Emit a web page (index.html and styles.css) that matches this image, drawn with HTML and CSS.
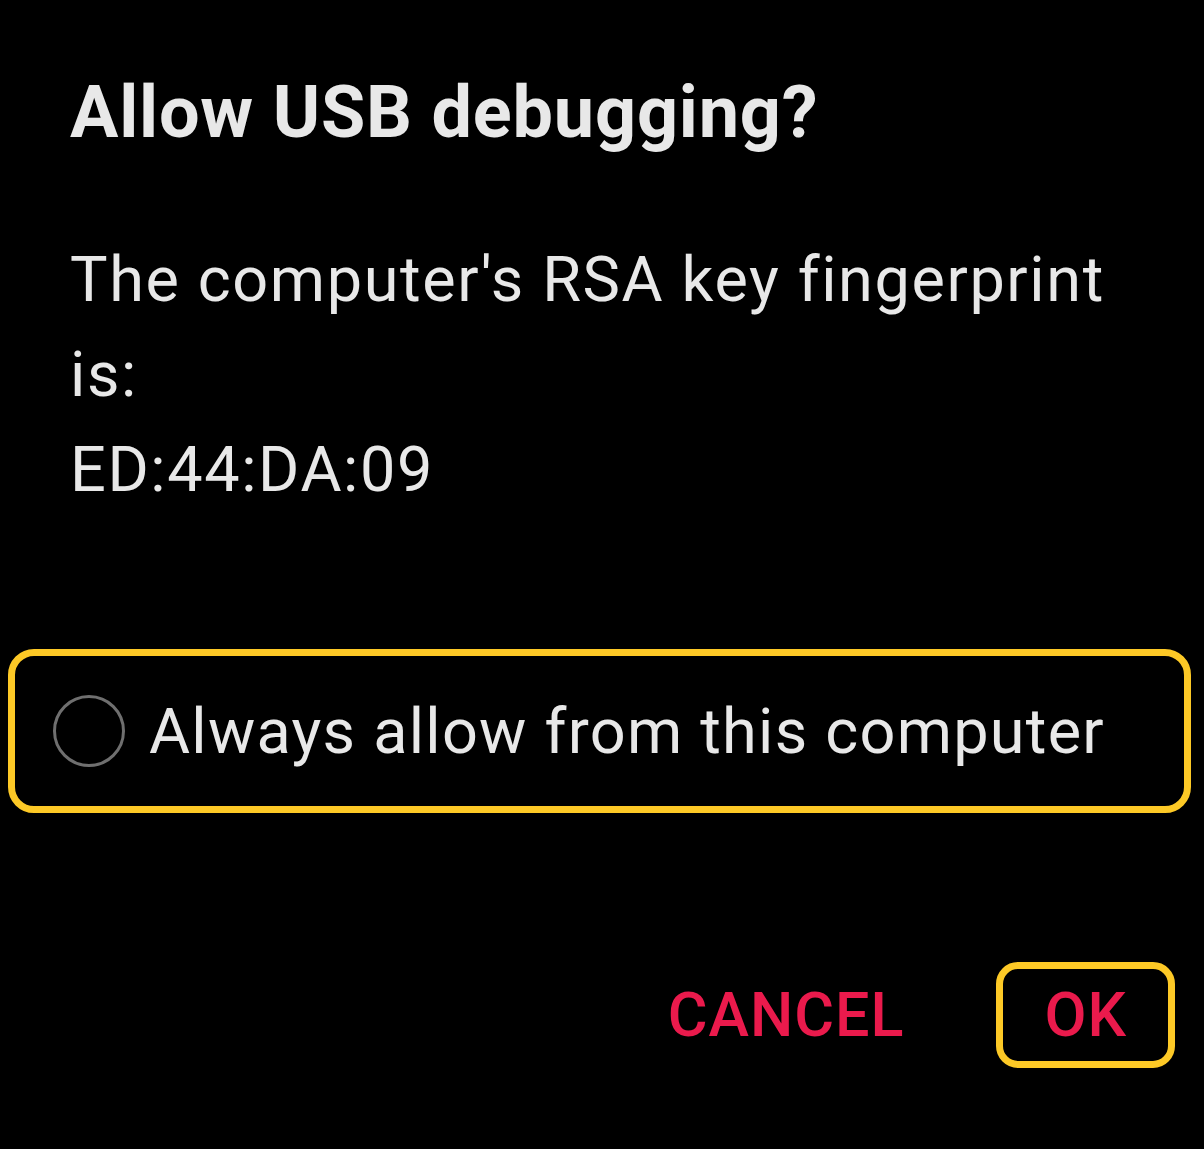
FILE: index.html
```html
<!DOCTYPE html>
<html>
<head>
<meta charset="utf-8">
<link rel="stylesheet" href="styles.css">
</head>
<body>
<div class="dialog">
  <h1 class="title">Allow USB debugging?</h1>
  <p class="message">The computer's RSA key fingerprint is:<br>ED:44:DA:09</p>
  <div class="check-row">
    <span class="radio"></span>
    <span class="check-label">Always allow from this computer</span>
  </div>
  <div class="actions">
    <span class="btn">CANCEL</span>
    <span class="btn btn-focus">OK</span>
  </div>
</div>
</body>
</html>
```

FILE: styles.css
```css
html, body {
  margin: 0;
  padding: 0;
  background: #000;
}
body {
  width: 1204px;
  height: 1149px;
  overflow: hidden;
  font-family: Roboto, "Open Sans", sans-serif;
  color: #e8e8e8;
}
.dialog {
  display: flex;
  flex-direction: column;
}
.title {
  margin: 70px 0 0 70px;
  font-size: 72px;
  line-height: 86px;
  font-weight: 700;
  letter-spacing: 0.8px;
}
.message {
  margin: 76px 60px 0 70px;
  font-size: 63px;
  line-height: 95px;
  font-weight: 400;
  letter-spacing: 1.6px;
}
.check-row {
  margin: 132px 13px 0 8px;
  height: 150px;
  border: 7px solid #fdc926;
  border-radius: 26px;
  display: flex;
  align-items: center;
  gap: 24px;
  padding-left: 38px;
}
.radio {
  width: 66px;
  height: 66px;
  border: 3px solid #6f6f6f;
  border-radius: 50%;
  flex: none;
}
.check-label {
  font-size: 63px;
  letter-spacing: 1.25px;
}
.actions {
  display: flex;
  justify-content: flex-end;
  align-items: center;
  margin: 149px 29px 0 0;
  gap: 44px;
}
.btn {
  color: #ea1a4c;
  font-size: 61px;
  font-weight: 500;
  letter-spacing: 1px;
  padding: 10px 41px;
  border: 7px solid transparent;
  border-radius: 22px;
}
.btn-focus {
  border-color: #fdc926;
}
```
